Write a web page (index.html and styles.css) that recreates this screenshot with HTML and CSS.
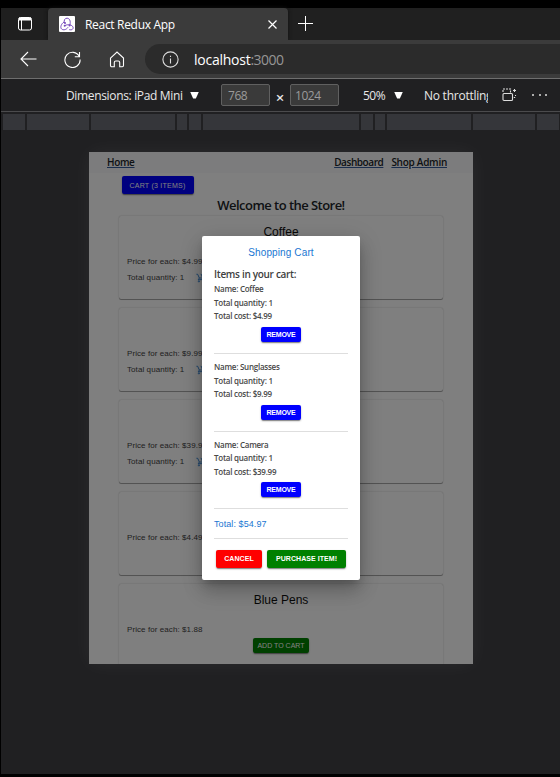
FILE: index.html
```html
<!DOCTYPE html>
<html lang="en">
<head>
<meta charset="utf-8">
<title>React Redux App</title>
<link rel="stylesheet" href="styles.css">
</head>
<body>
<div class="window">
  <div class="tabs">
    <div class="tab-actions">
      <svg width="16" height="16" viewBox="0 0 16 16" fill="none" stroke="#fff"><rect x="1.5" y="1.5" width="13" height="12.5" rx="2"/><path d="M2 3h12" stroke-width="3"/><path d="M4.5 4v10"/></svg>
    </div>
    <div class="tab">
      <svg class="favicon" width="16" height="16" viewBox="0 0 16 16"><rect width="16" height="16" rx="1" fill="#fff"/><g fill="none" stroke="#764abc" stroke-width="1"><path d="M10.800 9.200C12 5 10.500 2.200 8 2.200S4.700 4.700 5.500 7"/><path d="M5 6C2 8 1 11.500 2.600 13s4.800.8 6.400-1.700"/><path d="M6 9.500c3.500-1.600 7-.5 7.900 1.400s-1 3.600-3.700 2.700"/></g><g fill="#764abc"><circle cx="10.500" cy="9.500" r="1"/><circle cx="5.700" cy="9.800" r="1"/><circle cx="6" cy="7" r="1"/></g></svg>
      <span class="tab-title">React Redux App</span>
      <svg class="tab-close" width="9" height="9" viewBox="0 0 9 9" stroke="#fff" stroke-width="1.200"><path d="M.5.5l8 8M8.500.5l-8 8"/></svg>
    </div>
    <svg class="new-tab" width="15" height="15" viewBox="0 0 15 15" stroke="#fff"><path d="M0 7.500h15M7.500 0v15"/></svg>
  </div>
  <div class="navbar">
    <svg class="back" width="17" height="16" viewBox="0 0 17 16" fill="none" stroke="#fff" stroke-width="1.100"><path d="M16.500 8H1M8 1L1 8l7 7"/></svg>
    <svg class="reload" width="17" height="17" viewBox="0 0 17 17" fill="none" stroke="#fff" stroke-width="1.100"><path d="M15.300 5.500A7.600 7.600 0 1 0 16.100 8.500M15.500 1v4.800h-4.700"/></svg>
    <svg class="home" width="16" height="17" viewBox="0 0 16 17" fill="none" stroke="#fff" stroke-width="1.100"><path d="M1.500 7.100L8 1l6.500 6.100v7.400a1.200 1.200 0 0 1-1.200 1.200h-2.600v-4.200a1.500 1.500 0 0 0-1.500-1.500H6.800a1.500 1.500 0 0 0-1.500 1.500v4.200H2.700a1.200 1.200 0 0 1-1.200-1.200z"/></svg>
    <div class="address">
      <svg width="17" height="17" viewBox="0 0 17 17" fill="none" stroke="#ddd" stroke-width="1.100"><circle cx="8.500" cy="8.500" r="7.600"/><path d="M8.500 7.500v5M8.500 4.700v1.400"/></svg>
      <span class="url">localhost<span class="port">:3000</span></span>
    </div>
  </div>
  <div class="device-bar">
    <span class="device">Dimensions: iPad Mini</span><i class="caret"></i>
    <span class="size width">768</span><span class="times">×</span><span class="size">1024</span>
    <span class="zoom">50%</span><i class="caret zoom-caret"></i>
    <span class="throttle">No throttling</span>
    <svg class="rotate" width="15" height="14" viewBox="0 0 15 14" fill="none" stroke="#ddd" stroke-width="1.100"><rect x="1" y="5.500" width="9.500" height="7" rx="1"/><path d="M1 4V1h7.500v3.500" stroke-dasharray="2 1"/><path d="M11 2.500h3M12.500 1v3M13.500 7v1M11.800 9.500h1.400"/></svg>
    <span class="dots"><i></i><i></i><i></i></span>
  </div>
  <div class="ruler"><i></i><i></i><i></i><i></i><i></i><i></i><i></i><i></i><i></i><i></i><i></i></div>
  <main class="stage">
    <div class="viewport">
      <nav class="site-nav"><a class="l-home">Home</a><a class="l-dash">Dashboard</a><a class="l-admin">Shop Admin</a></nav>
      <div class="cart-row"><button class="btn cart-btn">CART (3 ITEMS)</button></div>
      <h1>Welcome to the Store!</h1>
      <div class="products">
        <section class="card"><h2>Coffee</h2><p>Price for each: $4.99</p><p class="qty">Total quantity: 1 <svg width="10" height="10" viewBox="0 0 24 24" fill="none" stroke="#1976d2" stroke-width="2"><path d="M1 3h3l4 9-2.500 4H19M8 12h8l4-7M11 2l5 5M16 3v4h-4"/><circle cx="7" cy="20" r="1.500"/><circle cx="17" cy="20" r="1.500"/></svg></p></section>
        <section class="card"><h2></h2><p>Price for each: $9.99</p><p class="qty">Total quantity: 1 <svg width="10" height="10" viewBox="0 0 24 24" fill="none" stroke="#1976d2" stroke-width="2"><path d="M1 3h3l4 9-2.500 4H19M8 12h8l4-7M11 2l5 5M16 3v4h-4"/><circle cx="7" cy="20" r="1.500"/><circle cx="17" cy="20" r="1.500"/></svg></p></section>
        <section class="card"><h2></h2><p>Price for each: $39.99</p><p class="qty">Total quantity: 1 <svg width="10" height="10" viewBox="0 0 24 24" fill="none" stroke="#1976d2" stroke-width="2"><path d="M1 3h3l4 9-2.500 4H19M8 12h8l4-7M11 2l5 5M16 3v4h-4"/><circle cx="7" cy="20" r="1.500"/><circle cx="17" cy="20" r="1.500"/></svg></p></section>
        <section class="card"><p class="only">Price for each: $4.49</p></section>
        <section class="card"><h2>Blue Pens</h2><p>Price for each: $1.88</p><button class="btn add-btn">ADD TO CART</button></section>
      </div>
      <div class="backdrop">
        <div class="modal">
          <h3>Shopping Cart</h3>
          <h4>Items in your cart:</h4>
          <div class="item"><p>Name: Coffee</p><p>Total quantity: 1</p><p>Total cost: $4.99</p><button class="btn remove">REMOVE</button></div>
          <div class="item"><p>Name: Sunglasses</p><p>Total quantity: 1</p><p>Total cost: $9.99</p><button class="btn remove">REMOVE</button></div>
          <div class="item"><p>Name: Camera</p><p>Total quantity: 1</p><p>Total cost: $39.99</p><button class="btn remove">REMOVE</button></div>
          <div class="total">Total: $54.97</div>
          <div class="actions"><button class="btn cancel">CANCEL</button><button class="btn purchase">PURCHASE ITEM!</button></div>
        </div>
      </div>
    </div>
  </main>
</div>
</body>
</html>
```
FILE: styles.css
```css
* { box-sizing: border-box; margin: 0; padding: 0; }
html, body { height: 777px; overflow: hidden; background: #000; }
body { font-family: "Open Sans", "Noto Sans", sans-serif; padding: 8px 0 3px 1px; }
svg { display: block; flex: none; }
span, a, button, p, h1, h2, h3, h4 { white-space: nowrap; }
.window { display: flex; flex-direction: column; height: 766px; background: #202022; }

.tabs { display: flex; height: 32px; background: #202020; }
.tab-actions { width: 47px; padding: 8px 0 0 16px; background: #1f1f1f; }
.tab { display: flex; width: 240px; height: 32px; align-items: center; padding: 0 11px; background: #3b3b3b; border-radius: 4px 4px 0 0; box-shadow: 0 0 4px #111; }
.tab-title { margin-left: 10px; color: #fff; font-size: 12px; letter-spacing: -.31px; }
.tab-close { margin-left: auto; margin-right: 0; }
.new-tab { margin: 8px 0 0 10px; }

.navbar { display: flex; align-items: center; height: 38px; background: #3b3b3b; flex: none; }
.back { margin-left: 19px; }
.reload { margin-left: 27px; }
.home { margin-left: 28px; }
.address { display: flex; flex: 1; align-items: center; height: 30px; margin-left: 20px; padding-left: 17px; background: #2b2b2b; border-radius: 15px 0 0 15px; }
.url { margin-left: 15px; color: #fff; font-size: 14px; letter-spacing: -.25px; }
.port { color: #969696; letter-spacing: -.5px; }

.device-bar { display: flex; align-items: center; height: 34px; flex: none; border-top: 1px solid #6e6e6e; border-bottom: 1px solid #4b4b4d; color: #e8e8e8; font-size: 12px; }
.device { width: 117px; margin-left: 65px; letter-spacing: -.34px; }
.caret { flex: none; width: 9px; height: 7px; margin-left: 7px; background: #fff; clip-path: polygon(0 0, 100% 0, 65% 100%, 35% 100%); }
.size { width: 49px; height: 22px; flex: none; padding-left: 6px; background: #3a3a3a; border: 1px solid #606060; border-radius: 2px; color: #9b9b9b; line-height: 21px; letter-spacing: -.45px; }
.size:not(.width) { padding-left: 4px; }
.width { margin-left: 22px; }
.times { width: 20px; text-align: center; font-size: 15px; font-weight: 600; padding-top: 3px; }
.zoom { width: 24px; margin-left: 24px; letter-spacing: -.5px; }
.throttle { width: 64px; margin-left: 21px; overflow: hidden; letter-spacing: -.25px; }
.rotate { margin-left: 14px; }
.dots { display: flex; gap: 4.500px; margin-left: 15px; }
.dots i { width: 2px; height: 2px; background: #ddd; border-radius: 1px; }

.ruler { display: grid; flex: none; grid-template-columns: 22px 62px 84px 10px 12px 156px 12px 10px 84px 62px 22px; column-gap: 2px; height: 18px; padding: 2px 0 0 2px; }
.ruler i { background: #35363a; }

.stage { flex: 1; padding: 22px 0 0 88px; }
.viewport { position: relative; width: 384px; height: 512px; overflow: hidden; background: #fff; font-family: "Liberation Sans", sans-serif; box-shadow: 0 0 20px rgba(255,255,255,.05); }
.site-nav { display: flex; height: 21px; padding: 0 26px 0 18px; align-items: center; background: #f8f9fa; font: 600 10px/21px "Open Sans", sans-serif; color: #212529; }
.site-nav a { text-decoration: underline; text-decoration-color: #345d9a; letter-spacing: -.35px; }
.l-dash { margin-left: auto; }
.site-nav .l-dash { letter-spacing: -.42px; }
.site-nav .l-admin { margin-left: 8px; letter-spacing: -.27px; }
.btn { display: block; border: 0; border-radius: 2px; color: #fff; font: 500 7px/1 "Liberation Sans", sans-serif; text-align: center; box-shadow: 0 1.500px 1px -1px rgba(0,0,0,.3), 0 1px 2px rgba(0,0,0,.3); }
.cart-row { height: 22px; padding: 3px 0 0 32.500px; }
.cart-btn { width: 72px; height: 18px; background: blue; letter-spacing: .24px; }
h1 { height: 21px; font: 600 13px/20px "Open Sans", sans-serif; color: #212529; text-align: center; letter-spacing: -.54px; }
.products { padding: 0 30px; }
.card { height: 83px; margin-bottom: 9px; padding: 9px 8px 0; border-radius: 2px; box-shadow: 0 1px .5px rgba(0,0,0,.3), 0 0 1.500px rgba(0,0,0,.3); color: #414141; font-size: 8px; }
.card h2 { height: 29px; font-size: 12px; font-weight: 400; line-height: 15px; text-align: center; color: #111; }
.card p { height: 16px; line-height: 16px; letter-spacing: .08px; }
.card .qty { display: flex; align-items: center; gap: 12px; }
.card .only { margin-top: 29px; }
.add-btn { width: 56px; height: 15px; margin: 0 auto; background: green; }

.backdrop { position: absolute; inset: 0; padding: 84px 0 0 113px; background: rgba(0,0,0,.5); }
.modal { width: 158px; height: 344px; padding: 9px 12px 0; background: #fff; border-radius: 2px; box-shadow: 0 5px 8px -3px rgba(0,0,0,.2), 0 12px 19px rgba(0,0,0,.18), 0 4px 23px rgba(0,0,0,.15); font-family: "Open Sans", sans-serif; }
.modal h3 { height: 22px; font: 400 10px/16px "Liberation Sans", sans-serif; color: #1976d2; text-align: center; letter-spacing: .12px; }
.modal h4 { height: 15px; font-size: 10px; line-height: 15px; font-weight: 600; color: #404040; letter-spacing: -.31px; }
.item { height: 77.700px; border-bottom: 1px solid #dedede; color: #484848; font-size: 8px; font-weight: 600; }
.item:nth-of-type(1) { height: 72px; }
.item + .item { padding-top: 6px; }
.item p { height: 13.600px; line-height: 13.600px; letter-spacing: -.25px; }
.remove { width: 39.500px; height: 15px; margin: 4px auto 0; background: blue; letter-spacing: -.2px; font-weight: 700; }
.total { height: 30px; border-bottom: 1px solid #dedede; font: 400 9px/30px "Liberation Sans", sans-serif; color: #1976d2; letter-spacing: .08px; }
.actions { display: flex; justify-content: center; gap: 5px; margin-top: 10.500px; }
.actions .btn { height: 18px; font-weight: 700; letter-spacing: .06px; }
.cancel { width: 46px; background: red; }
.purchase { width: 79px; background: green; }
```
